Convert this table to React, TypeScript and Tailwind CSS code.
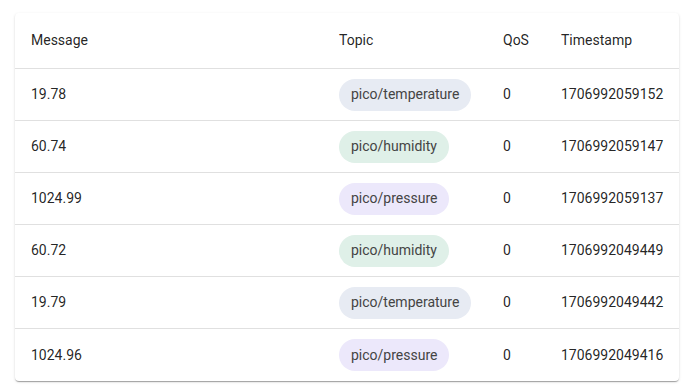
import React from "react"

type Row = { message: string; topic: string; qos: number; ts: string }

const rows: Row[] = [
    { message: "19.78", topic: "pico/temperature", qos: 0, ts: "1706992059152" },
    { message: "60.74", topic: "pico/humidity", qos: 0, ts: "1706992059147" },
    { message: "1024.99", topic: "pico/pressure", qos: 0, ts: "1706992059137" },
    { message: "60.72", topic: "pico/humidity", qos: 0, ts: "1706992049449" },
    { message: "19.79", topic: "pico/temperature", qos: 0, ts: "1706992049442" },
    { message: "1024.96", topic: "pico/pressure", qos: 0, ts: "1706992049416" },
]

// chip colour per topic
const chipClass: Record<string, string> = {
    "pico/temperature": "bg-[#e7ebf3]",
    "pico/humidity": "bg-[#dff0e8]",
    "pico/pressure": "bg-[#ece8fb]",
}

export default function App() {
    return (
        <div className="w-[685px] h-[389px] bg-white pt-[13px] pl-[15px] font-['Roboto','Liberation_Sans',sans-serif] text-[14px] text-[rgba(0,0,0,0.87)]">
            <div className="w-[664px] bg-white rounded-[4px] shadow-[0_2px_1px_-1px_rgba(0,0,0,0.2),0_1px_1px_0_rgba(0,0,0,0.14),0_1px_3px_0_rgba(0,0,0,0.12)]">
                <div className="flex items-center h-[56px] border-b border-[#e0e0e0]">
                    <div className="w-[308px] pl-4">Message</div>
                    <div className="w-[164px] pl-4">Topic</div>
                    <div className="w-[58px] pl-4">QoS</div>
                    <div className="flex-1 pl-4">Timestamp</div>
                </div>
                {rows.map((r, i) => (
                    <div
                        key={i}
                        className={`flex items-center h-[52px] ${i < rows.length - 1 ? "border-b border-[#e0e0e0]" : ""}`}
                    >
                        <div className="w-[308px] pl-4">{r.message}</div>
                        <div className="w-[164px] pl-4">
                            <span className={`inline-flex items-center h-[32px] px-3 rounded-full text-[#444] ${chipClass[r.topic]}`}>
                                {r.topic}
                            </span>
                        </div>
                        <div className="w-[58px] pl-4">{r.qos}</div>
                        <div className="flex-1 pl-4">{r.ts}</div>
                    </div>
                ))}
            </div>
        </div>
    )
}
